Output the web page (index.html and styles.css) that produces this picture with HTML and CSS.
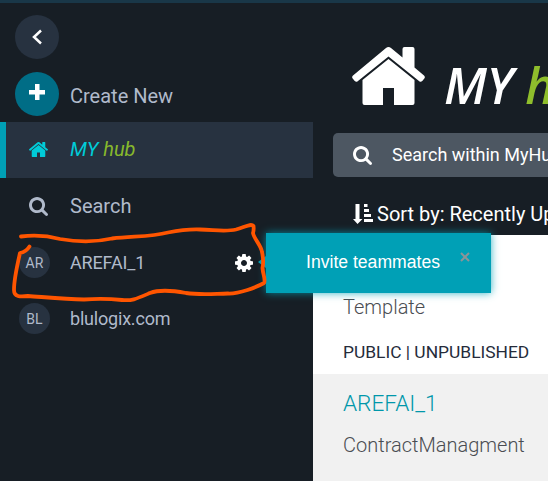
FILE: index.html
```html
<!DOCTYPE html>
<html lang="en">
<head>
<meta charset="utf-8">
<title>MY hub</title>
<link rel="stylesheet" href="styles.css">
</head>
<body>
<svg class="defs" width="0" height="0">
  <symbol id="home" viewBox="89 253 1614 1283" preserveAspectRatio="none"><path d="M1472 992v480q0 26-19 45t-45 19h-384v-384h-256v384h-384q-26 0-45-19t-19-45v-480q0-1 .5-3t.5-3l575-474 575 474q1 2 1 6zm223-69l-62 74q-8 9-21 11h-3q-13 0-21-7l-692-577-692 577q-12 8-24 7-13-2-21-11l-62-74q-8-10-7-23.500t11-21.500l719-599q32-26 76-26t76 26l244 204v-195q0-14 9-23t23-9h192q14 0 23 9t9 23v408l219 182q10 8 11 21.500t-7 23.500z"/></symbol>
  <symbol id="search" viewBox="64 128 1664 1664"><path d="M1216 832q0-185-131.500-316.500t-316.500-131.500-316.500 131.500-131.500 316.500 131.500 316.500 316.500 131.500 316.500-131.500 131.500-316.500zm512 832q0 52-38 90t-90 38q-54 0-90-38l-343-342q-179 124-399 124-143 0-273.500-55.500t-225-150-150-225-55.500-273.500 55.500-273.500 150-225 225-150 273.500-55.500 273.500 55.500 225 150 150 225 55.500 273.500q0 220-124 399l343 343q37 37 37 90z"/></symbol>
  <symbol id="cog" viewBox="128 128 1536 1536"><path d="M1152 896q0-106-75-181t-181-75-181 75-75 181 75 181 181 75 181-75 75-181zm512-109v222q0 12-8 23t-20 13l-185 28q-19 54-39 91 35 50 107 138 10 12 10 25t-9 23q-27 37-99 108t-94 71q-12 0-26-9l-138-108q-44 23-91 38-16 136-29 186-7 28-36 28h-222q-14 0-24.500-8.500t-11.500-21.500l-28-184q-49-16-90-37l-141 107q-10 9-25 9-14 0-25-11-126-114-165-168-7-10-7-23 0-12 8-23 15-21 51-66.500t54-70.500q-27-50-41-99l-183-27q-13-2-21-12.500t-8-23.500v-222q0-12 8-23t19-13l186-28q14-46 39-92-40-57-107-138-10-12-10-24 0-10 9-23 26-36 98.500-107.500t94.500-71.500q13 0 26 10l138 107q44-23 91-38 16-136 29-186 7-28 36-28h222q14 0 24.500 8.500t11.500 21.500l28 184q49 16 90 37l142-107q9-9 24-9 13 0 25 10 129 119 165 170 7 8 7 22 0 12-8 23-15 21-51 66.500t-54 70.500q26 50 41 98l183 28q13 2 21 12.500t8 23.500z"/></symbol>
</svg>
<div class="topbar"></div>
<div class="app">
  <nav class="sidebar">
    <button class="round back"><svg width="12" height="16" viewBox="0 0 12 16"><path d="M10 1.500L3 8l7 6.500" fill="none" stroke="#fff" stroke-width="2.500"/></svg></button>
    <div class="create"><button class="round add"><svg width="16" height="16" viewBox="0 0 16 16"><path d="M6 0h4.500v6H16v4.500h-5.500V16H6v-5.500H0V6h6z" fill="#fff"/></svg></button><span class="label">Create New</span></div>
    <div class="item active"><span class="icon"><svg width="19" height="15"><use href="#home"/></svg></span><span class="label hub">MY <b>hub</b></span></div>
    <div class="item"><span class="icon"><svg width="19" height="19"><use href="#search"/></svg></span><span class="label">Search</span></div>
    <div class="item team"><span class="icon"><span class="avatar">AR</span></span><span class="label tight">AREFAI_1</span><svg class="gear" width="18" height="18"><use href="#cog"/></svg></div>
    <div class="item team"><span class="icon"><span class="avatar">BL</span></span><span class="label site">blulogix.com</span></div>
  </nav>
  <main class="main">
    <header class="hero">
      <svg class="house" width="73" height="58" viewBox="0 0 73 58"><path d="M10.500 33L36.500 12 62.500 33v23q0 2-2 2H42V41H31v17H12.500q-2 0-2-2z"/><path d="M34 1q2.500-2 5 0l11.500 9.500V2q0-2 2-2h8q2 0 2 2v18.500l9.500 8q1.500 1.500.3 3l-2 2.500q-1.500 1.500-3 .3L36.500 9.500 5.700 34.300q-1.500 1.200-3-.3l-2-2.500q-1.200-1.500.3-3z"/></svg>
      <h1>MY <b>hub</b></h1>
    </header>
    <div class="searchbox"><svg width="19" height="19"><use href="#search"/></svg><span>Search within MyHu</span></div>
    <div class="sort"><svg width="20" height="20" viewBox="0 0 20 20"><path d="M2.500 0h4v15h3L4.500 20 0 15h2.500zM11 0h3.500v3H11zM11 5h5v3h-5zM11 10h7v3h-7zM11 15h9v3h-9z"/></svg><span>Sort by: Recently Up</span></div>
    <section class="card"><p class="kind">Template</p><p class="status">PUBLIC | UNPUBLISHED</p></section>
    <section class="card alt"><h2>AREFAI_1</h2><p class="desc">ContractManagment</p></section>
  </main>
</div>
<div class="tooltip"><span>Invite teammates</span><svg class="close" width="10" height="10" viewBox="0 0 10 10"><path d="M1 1l8 8M9 1L1 9" stroke="#8c9498" stroke-width="2"/></svg></div>
<svg class="stroke" width="548" height="481" viewBox="0 0 548 481"><path d="M21 236.500Q41 234 60 239Q88 244 112 238.500C134 236 151 237 168 232.500Q186 229 200 229.500C216 230 226 232 236 229.500C245 227 251 223 253.500 226Q254 230 253 233C254 239 261 245 262 252Q264 261 262.500 268C263 275 266 280 264 283C257 287 239 294 228 293.500C209 294 199 295 186 293C170 290 158 290 150 293C136 299 132 301 122 300Q103 298 84 299.500C65 299 43 297 28 296C20 297 14 297 14 290C14 279 17 266 20 253Q26 252 29.500 246.500"/></svg>
</body>
</html>
```

FILE: styles.css
```css
* { box-sizing: border-box; }
body { margin: 0; width: 548px; height: 481px; overflow: hidden; position: relative; background: #171e25; font-family: Roboto, "Liberation Sans", sans-serif; white-space: nowrap; }
p, h1, h2 { margin: 0; }
button { border: 0; padding: 0; }
svg { display: block; fill: currentColor; flex: none; }
.defs { position: absolute; }
.topbar { height: 3px; background: #193748; }
.app { display: flex; height: 478px; }
.sidebar { width: 313px; flex: none; padding-top: 12px; color: #b0bacb; }
.round { width: 44px; height: 44px; border-radius: 50%; display: flex; align-items: center; justify-content: center; flex: none; }
.back { margin-left: 15px; background: #273240; }
.create { display: flex; margin: 13px 0 6px 15px; gap: 11px; height: 44px; }
.add { background: #006d86; padding-bottom: 4px; }
.label { font-size: 20px; line-height: 24px; }
.create .label { margin-top: 12px; }
.item { display: flex; align-items: center; height: 56px; }
.item .icon { width: 70px; padding-right: 1px; margin-right: 0; display: flex; justify-content: center; }
.item.team { padding-top: 1px; }
.active { background: #273240; border-left: 6px solid #00a0b6; color: #00cbd8; padding-bottom: 2px; }
.active .icon { width: 64px; padding: 0; }
.item:not(.active):not(.team) .icon { padding: 0 0 0 7px; }
.hub { font-style: italic; }
.hub b { color: #87b92c; font-weight: 400; }
.avatar { width: 31px; height: 31px; border-radius: 50%; background: #273240; display: flex; align-items: center; justify-content: center; font-size: 14px; }
.tight { font-size: 18px; letter-spacing: -0.150px; }
.site { font-size: 18px; letter-spacing: -0.200px; }
.gear { color: #fff; margin: 0 60px 0 auto; }
.main { flex: 1; min-width: 0; overflow: hidden; color: #fff; display: flex; flex-direction: column; }
.hero { display: flex; height: 130px; flex: none; padding: 44px 0 0 39px; }
.hero h1 { font: italic 600 50px/58px "Open Sans", "Noto Sans", sans-serif; letter-spacing: -0.500px; margin: 9px 0 0 19px; }
.hero b { color: #8fbe2c; font-weight: 600; }
.searchbox { height: 44px; width: 300px; margin-left: 20px; padding-left: 20px; border-radius: 5px; background: #4d5762; display: flex; align-items: center; gap: 20px; font-size: 18px; flex: none; }
.searchbox span { padding-bottom: 2px; }
.sort { height: 58px; flex: none; padding: 27px 0 0 40px; display: flex; gap: 4px; font-size: 20px; line-height: 20px; }
.card { height: 139px; flex: none; padding: 60px 0 0 30px; background: #fff; color: #4a4d52; font-weight: 300; }
.kind, .desc { font-size: 20px; line-height: 24px; }
.status { font-size: 17.400px; line-height: 24px; margin-top: 21px; color: #252b3a; font-weight: 400; }
.alt { padding-top: 15px; background: #f1f1f1; }
.alt h2 { font-size: 22.600px; line-height: 30px; font-weight: 300; color: #0097aa; }
.desc { margin-top: 14px; }
.tooltip { position: absolute; left: 266px; top: 233px; width: 225px; height: 60px; padding: 0 0 2px 40px; display: flex; align-items: center; color: #fff; background: #00a0b6; box-shadow: 0 0 8px rgba(0,160,182,.8); font: 17.600px "Liberation Sans", sans-serif; }
.tooltip::before { content: ""; position: absolute; left: -8px; top: 23px; border: 6px solid transparent; border-right: 8px solid #00a0b6; border-left: 0; }
.close { margin: 0 0 10px 20px; }
.stroke { position: absolute; left: 0; top: 0; fill: none; stroke: #ff5500; stroke-width: 3.800; stroke-linecap: round; stroke-linejoin: round; pointer-events: none; }
```
